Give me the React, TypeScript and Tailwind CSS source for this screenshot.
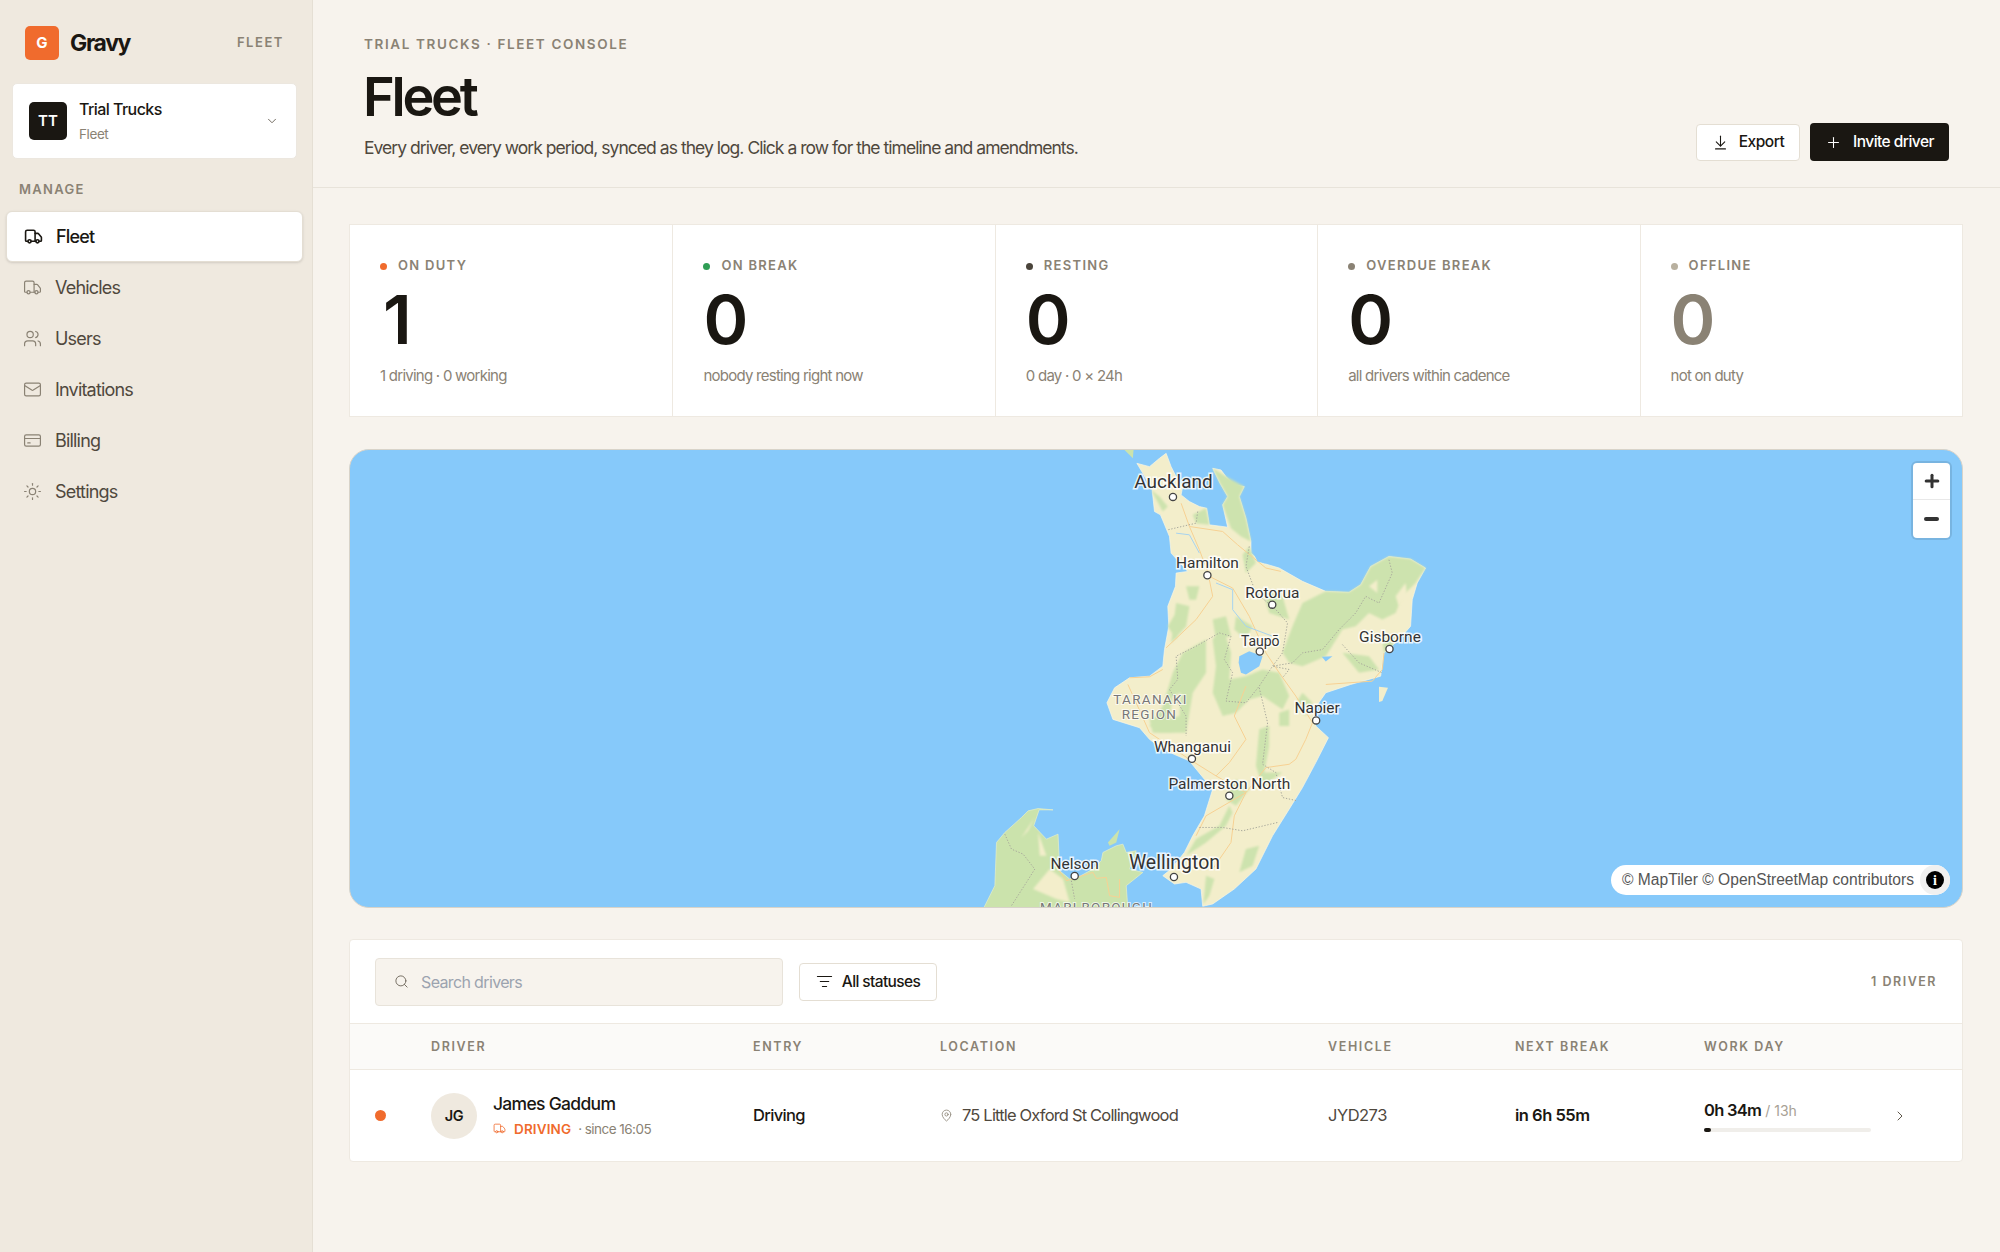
import { ChevronDown, ChevronRight, ArrowDownToLine, Plus, Search, ListFilter, MapPin, Truck, Users, Mail, Sun } from 'lucide-react';

function BillingIcon({ className }: { className?: string }) {
  return (
    <svg viewBox="0 0 24 24" fill="none" stroke="currentColor" strokeWidth="1.5" strokeLinecap="round" className={className}>
      <rect x="2" y="5" width="20" height="14" rx="2" />
      <path d="M2 9.5h20M6 15h3" />
    </svg>
  );
}

const navItems = [
  { label: 'Fleet', icon: Truck, active: true },
  { label: 'Vehicles', icon: Truck },
  { label: 'Users', icon: Users },
  { label: 'Invitations', icon: Mail },
  { label: 'Billing', icon: BillingIcon },
  { label: 'Settings', icon: Sun },
];

const stats = [
  { label: 'ON DUTY', value: '1', note: '1 driving · 0 working', dot: 'bg-[#f06b2d]', num: 'text-[#1a1712] ml-[3px]' },
  { label: 'ON BREAK', value: '0', note: 'nobody resting right now', dot: 'bg-[#2f9e55]', num: 'text-[#1a1712]' },
  { label: 'RESTING', value: '0', note: '0 day · 0 × 24h', dot: 'bg-[#4a443b]', num: 'text-[#1a1712]' },
  { label: 'OVERDUE BREAK', value: '0', note: 'all drivers within cadence', dot: 'bg-[#8a8274]', num: 'text-[#1a1712]' },
  { label: 'OFFLINE', value: '0', note: 'not on duty', dot: 'bg-[#b8b09f]', num: 'text-[#8a8274]' },
];

const cities = [
  { name: 'Auckland', x: 824, size: 19, dotX: 823.5, dotY: 47, dy: 8.5 },
  { name: 'Hamilton', x: 858, size: 15.5, dotX: 858, dotY: 125.5, dy: 7 },
  { name: 'Rotorua', x: 923, size: 15.5, dotX: 923, dotY: 155, dy: 7 },
  { name: 'Taupō', x: 911, size: 14, dotX: 910.5, dotY: 202, dy: 6 },
  { name: 'Gisborne', x: 1041, size: 15.5, dotX: 1040.5, dotY: 199.5, dy: 7 },
  { name: 'Napier', x: 968, size: 15.5, dotX: 967, dotY: 271, dy: 7 },
  { name: 'Whanganui', x: 843, size: 15.5, dotX: 842.5, dotY: 309.5, dy: 7 },
  { name: 'Palmerston North', x: 880, size: 15.5, dotX: 880, dotY: 346.5, dy: 7 },
  { name: 'Nelson', x: 725, size: 15.5, dotX: 725, dotY: 427, dy: 7 },
  { name: 'Wellington', x: 825, size: 19.5, dotX: 824.5, dotY: 428, dy: 8 },
];

function NzMap() {
  return (
    <svg viewBox="0 0 1613 458" className="block w-full h-full">
      <defs>
        <filter id="soft" x="-10%" y="-10%" width="120%" height="120%">
          <feGaussianBlur stdDeviation="3" />
        </filter>
      </defs>
      <g transform="translate(700,-10) scale(0.3333)">
        <path fill="#f3eecb" stroke="#fbf8e6" strokeWidth="2" d="M262,70 L300,80 L330,55 L350,40 L365,80 L380,110 L400,140 L395,165 L420,185 L450,200 L472,205 L480,255 L535,262 L520,195 L535,170 L512,130 L490,85 L515,90 L530,110 L555,135 L585,140 L570,170 L590,235 L605,305 L605,340 L640,370 L690,385 L760,425 L830,455 L900,458 L935,435 L965,380 L1020,350 L1085,358 L1130,385 L1105,430 L1090,480 L1085,560 L1050,600 L1005,640 L995,710 L905,735 L830,760 L795,810 L800,860 L838,895 L800,970 L760,1045 L720,1110 L670,1190 L620,1290 L555,1350 L490,1395 L460,1402 L455,1350 L410,1330 L375,1335 L340,1310 L365,1290 L405,1240 L430,1190 L465,1130 L490,1050 L465,1020 L420,965 L340,930 L300,900 L270,865 L190,840 L172,790 L195,745 L240,715 L300,710 L340,680 L345,630 L358,560 L355,500 L378,440 L380,400 L415,395 L365,340 L360,290 L333,225 L315,215 L308,150 L280,100 Z" />
        <path fill="#f3eecb" d="M990,742 L1017,745 L1000,785 L990,788 Z" />
        <path fill="#cbe3ac" d="M225,30 L252,30 L250,55 Z" />
        <g fill="#cde3ae" filter="url(#soft)">
          <path d="M965,380 L1020,350 L1085,358 L1130,385 L1100,430 L1060,470 L1040,520 L1000,540 L960,520 L920,560 L880,570 L830,650 L760,680 L720,670 L700,640 L730,560 L760,490 L830,455 L900,458 L935,435 Z" />
          <path d="M490,85 L530,110 L585,140 L570,170 L590,235 L605,305 L575,290 L545,265 L520,195 L535,170 L512,130 Z" />
          <path d="M600,320 L620,370 L590,400 L580,345 Z" />
          <path d="M520,560 L545,640 L540,720 L590,710 L640,690 L690,700 L720,770 L700,810 L640,770 L600,780 L560,820 L520,830 L490,760 L500,680 L490,600 Z" />
          <path d="M400,640 L470,600 L470,700 L430,760 L410,880 L330,880 L300,860 L340,800 L370,700 Z" />
          <path d="M355,560 L385,510 L410,510 L380,600 Z" />
          <path d="M630,870 L660,860 L660,920 L645,1000 L700,1000 L640,1040 L620,980 Z" />
          <path d="M540,1100 L510,1160 L440,1200 L410,1250 L470,1210 L530,1160 L550,1120 Z" />
          <path d="M590,1230 L630,1220 L610,1280 L570,1300 Z" />
          <path d="M305,150 L340,215 L355,200 L330,170 Z" />
          <path d="M430,225 L470,205 L480,255 L440,250 Z" />
          <path d="M410,440 L450,440 L440,480 L420,480 Z" />
          <path d="M470,1310 L495,1320 L480,1370 L462,1395 Z" />
          <path d="M560,530 L610,560 L590,600 L555,570 Z" />
          <path d="M760,760 L790,790 L770,830 L735,800 Z" />
          <path d="M880,640 L960,650 L990,690 L930,700 Z" />
          <path d="M1000,600 L1040,580 L1030,620 L1005,640 Z" />
          <path d="M380,490 L420,500 L410,560 L365,610 Z" />
          <path d="M490,540 L530,530 L545,590 L500,600 Z" />
          <path d="M640,450 L700,470 L720,540 L660,520 Z" />
          <path d="M300,840 L350,830 L370,880 L310,880 Z" />
          <path d="M690,820 L720,810 L720,860 L690,860 Z" />
          <path d="M560,1020 L600,1050 L560,1100 L530,1080 Z" />
        </g>
        <g fill="#f3eecb" filter="url(#soft)">
          <path d="M1040,470 L1070,430 L1075,470 L1050,500 Z" />
          <path d="M960,440 L985,420 L985,460 Z" />
          <path d="M370,770 L395,760 L390,830 L360,840 Z" />
        </g>
        <g fill="none" stroke="#f7d193" strokeWidth="3">
          <path d="M395,190 L420,260 L450,330 L480,410 L550,445 L600,530 L650,640 L690,700 L740,770 L790,850 L770,900 L740,960 L720,975 L650,985 L590,1060 L555,1130 L545,1210 L490,1290" />
          <path d="M420,260 L520,275 L565,315 L650,385 L695,395" />
          <path d="M480,420 L490,470 L440,540 L350,625" />
          <path d="M240,715 L300,712 L340,690 M235,735 L260,790 L300,880 L420,960 L500,1010 L590,1060 L470,1130 L440,1190" />
          <path d="M590,740 L555,830 L590,900 L540,970 L500,1010" />
          <path d="M830,735 L970,725 L1000,690 L1005,640" />
        </g>
        <g fill="none" stroke="#a7d3ef" strokeWidth="3">
          <path d="M380,280 L420,285 L450,340 M500,430 L550,450 L550,510 L590,560 L670,590" />
        </g>
        <g fill="none" stroke="#a8a89b" strokeWidth="3" strokeDasharray="4 5">
          <path d="M445,215 L440,250 L355,270 M600,320 L590,380 L620,460 L680,510 L715,550 L700,640 L670,680 L630,740 L590,790 L530,785 L550,700 L525,660 L545,590 L510,580 L440,620 L380,650 L385,720 L360,750 L410,830 L410,890" />
          <path d="M1020,360 L1030,400 L990,490 L950,470 L920,520 L870,570 L820,630 L760,640 L730,670 L670,680 L720,690 L700,715" />
          <path d="M880,615 L930,670 L1000,700 M630,745 L655,850 L640,975 L680,1000 L700,1075 L745,1085" />
          <path d="M450,1165 L520,1165 L580,1175 L685,1150" />
        </g>
        <g fill="#86c9fa">
          <path d="M570,650 L600,635 L640,650 L630,680 L590,705 L575,700 L568,670 Z" />
          <path d="M818,652 L850,650 L830,666 Z" />
          <path d="M610,335 L650,372 L625,365 Z" />
        </g>
      </g>
      <g transform="translate(610,340) scale(0.3333)">
        <path fill="#cbe3ac" stroke="#e8f0c8" strokeWidth="2" d="M70,360 L105,290 L110,160 L135,130 L185,85 L205,65 L235,58 L280,62 L238,62 L222,110 L260,150 L295,135 L298,200 L290,215 L300,245 L330,270 L360,262 L400,240 L425,215 L430,190 L470,170 L490,165 L500,190 L530,185 L510,240 L550,250 L500,290 L505,360 Z" />
        <path fill="#cbe3ac" d="M445,160 L480,120 L470,160 L450,170 Z" />
        <g fill="#f3eecb" filter="url(#soft)">
          <path d="M185,145 L225,85 L205,125 Z" />
          <path d="M235,130 L260,200 L240,200 Z" />
          <path d="M270,240 L310,270 L330,340 L290,330 L220,300 Z" />
        </g>
        <g fill="none" stroke="#f7d193" strokeWidth="3">
          <path d="M295,240 L320,275 L400,250 L410,268 L440,265 L450,320 L480,325 M480,270 L480,325" />
        </g>
        <path fill="none" stroke="#a8a89b" strokeWidth="3" strokeDasharray="4 5" d="M135,135 L155,180 L190,195 L225,240 L200,280 L155,350 M335,275 L345,330" />
      </g>
      {cities.map((c) => (
        <g key={c.name}>
          <text x={c.x} y={c.dotY - c.dy} textAnchor="middle" fontSize={c.size} className="fill-[#333] stroke-white/80 stroke-[3px] [paint-order:stroke] [font-family:Roboto,sans-serif]">{c.name}</text>
          <circle cx={c.dotX} cy={c.dotY} r="3.6" fill="white" stroke="#444" strokeWidth="1.3" />
        </g>
      ))}
      <g fontSize="13.5" letterSpacing="1.3" textAnchor="middle" className="fill-[#777] stroke-white/70 stroke-[2px] [paint-order:stroke] [font-family:Roboto,sans-serif]">
        <text x="801" y="255">TARANAKI</text>
        <text x="800" y="270">REGION</text>
        <text x="747" y="463">MARLBOROUGH</text>
      </g>
    </svg>
  );
}

export default function App() {
  return (
    <div className="flex min-h-[1252px] bg-[#f7f3ed] text-[#1a1712] [font-family:Inter,sans-serif]">
      <aside className="w-[313px] shrink-0 bg-[#efe9df] border-r border-[#e5dfd4]">
        <div className="flex items-center pl-[25px] pr-[28px] pt-[26px] h-[60px]">
          <div className="w-[34px] h-[34px] rounded-[5px] bg-[#f06b2d] text-white flex items-center justify-center text-[15px] font-bold">G</div>
          <span className="ml-[11px] text-[23px] font-bold tracking-[-0.06em]">Gravy</span>
          <span className="ml-auto text-[13px] font-semibold tracking-[0.12em] text-[#8a8274]">FLEET</span>
        </div>
        <div className="ml-[12px] mr-[15px] mt-[23px] h-[76px] bg-white rounded-[5px] border border-[#ece7df] flex items-center pl-[16px] pr-[17px]">
          <div className="w-[38px] h-[38px] rounded-[5px] bg-[#1a1712] text-white flex items-center justify-center text-[15px] font-semibold">TT</div>
          <div className="ml-[12px]">
            <div className="text-[16px] font-medium tracking-[-0.035em] leading-[20px]">Trial Trucks</div>
            <div className="text-[13.5px] text-[#8a8274] tracking-[-0.03em] leading-[20px] mt-[5px]">Fleet</div>
          </div>
          <ChevronDown className="ml-auto w-[14px] h-[14px] text-[#5f574b]" strokeWidth={1.5} />
        </div>
        <div className="pl-[19px] mt-[22px] text-[13px] font-semibold tracking-[0.1em] text-[#8a8274] leading-[16px]">MANAGE</div>
        <nav className="mt-[14px] ml-[6px] mr-[9px] flex flex-col">
          {navItems.map((item) => (
            <div key={item.label} className={`h-[51px] flex items-center pl-[17px] rounded-[6px] text-[18px] tracking-[-0.045em] ${item.active ? 'bg-white border border-[#e4ded3] shadow-sm font-medium text-[#1a1712]' : 'text-[#4f483d]'}`}>
              <item.icon className={`w-[19px] h-[19px] ${item.active ? 'text-[#1a1712]' : 'text-[#8a8274]'}`} strokeWidth={item.active ? 2 : 1.5} />
              <span className="ml-[13px]">{item.label}</span>
            </div>
          ))}
        </nav>
      </aside>

      <main className="flex-1 min-w-0">
        <header className="h-[188px] border-b border-[#e8e3da] pl-[51px] pr-[51px] pb-[26px] flex items-end justify-between">
          <div className="self-start pt-[36px]">
            <div className="text-[13.5px] font-semibold tracking-[0.12em] text-[#8a8274] leading-[16px]">TRIAL TRUCKS · FLEET CONSOLE</div>
            <h1 className="text-[54px] font-semibold tracking-[-0.06em] leading-[60px] mt-[15px] -ml-[1px]">Fleet</h1>
            <p className="text-[17.5px] text-[#4f483d] tracking-[-0.055em] leading-[24px] mt-[9px]">Every driver, every work period, synced as they log. Click a row for the timeline and amendments.</p>
          </div>
          <div className="flex items-center gap-[10px]">
            <button className="h-[37px] w-[104px] bg-white border border-[#e4ded3] rounded-[4px] flex items-center justify-center gap-[10px] text-[15.5px] font-medium tracking-[-0.03em]">
              <ArrowDownToLine className="w-[17px] h-[17px]" strokeWidth={1.5} />Export
            </button>
            <button className="h-[38px] w-[139px] bg-[#1a1712] text-white rounded-[4px] flex items-center justify-center gap-[11px] text-[15.5px] font-medium tracking-[-0.035em]">
              <Plus className="w-[17px] h-[17px]" strokeWidth={1.5} />Invite driver
            </button>
          </div>
        </header>

        <div className="pl-[36px] pr-[37px] pt-[36px]">
          <section className="grid grid-cols-5 bg-white border border-[#eee9e1] h-[193px]">
            {stats.map((s, i) => (
              <div key={s.label} className={`pl-[30px] pt-[33px] ${i > 0 ? 'border-l border-[#eee9e1]' : ''}`}>
                <div className="flex items-center h-[16px] text-[13px] font-semibold tracking-[0.1em] text-[#8a8274]">
                  <span className={`w-[7px] h-[7px] rounded-full ${s.dot}`} />
                  <span className="ml-[11px]">{s.label}</span>
                </div>
                <div className={`text-[68px] font-semibold leading-[68px] mt-[11px] ${s.num}`}>{s.value}</div>
                <div className="text-[15px] text-[#8a8274] tracking-[-0.05em] leading-[20px] mt-[13px]">{s.note}</div>
              </div>
            ))}
          </section>

          <section className="relative h-[459px] mt-[32px] rounded-[20px] overflow-hidden bg-[#86c9fa] border border-[#d8d3c9]">
            <NzMap />
            <div className="absolute top-[13px] right-[12px] w-[37px] h-[75px] bg-white rounded-[4px] ring-2 ring-black/10 flex flex-col items-center">
              <div className="h-[37px] w-full flex items-center justify-center border-b border-[#e8e8e8]"><Plus className="w-[20px] h-[20px] text-[#333]" strokeWidth={3.6} /></div>
              <div className="flex-1 flex items-center justify-center"><div className="w-[15px] h-[3.5px] rounded-sm bg-[#333]" /></div>
            </div>
            <div className="absolute right-[12px] bottom-[12px] h-[30px] bg-white rounded-full flex items-center pl-[11px] text-[15.6px] text-[#555] [font-family:'Liberation_Sans',sans-serif]">
              © MapTiler © OpenStreetMap contributors
              <span className="ml-[6px] w-[30px] h-[30px] rounded-full bg-[#f0f0f0] flex items-center justify-center">
                <span className="w-[18px] h-[18px] rounded-full bg-black text-white text-[14px] font-bold flex items-center justify-center [font-family:'Liberation_Serif',serif]">i</span>
              </span>
            </div>
          </section>

          <section className="mt-[31px] bg-white border border-[#eee9e1] rounded-[4px]">
            <div className="h-[83px] flex items-center pl-[25px] pr-[25px]">
              <div className="w-[408px] h-[48px] rounded-[4px] bg-[#f7f3ed] border border-[#e8e3da] flex items-center pl-[18px]">
                <Search className="w-[15px] h-[15px] text-[#6f685c]" strokeWidth={1.5} />
                <span className="ml-[12px] text-[16px] text-[#9ca3af] tracking-[-0.04em]">Search drivers</span>
              </div>
              <button className="ml-[16px] w-[138px] h-[38px] bg-white border border-[#e4ded3] rounded-[4px] flex items-center justify-center gap-[9px] text-[15.5px] font-medium tracking-[-0.04em]">
                <ListFilter className="w-[17px] h-[17px]" strokeWidth={1.5} />All statuses
              </button>
              <span className="ml-auto pt-[1px] text-[12.5px] font-semibold tracking-[0.12em] text-[#8a8274]">1 DRIVER</span>
            </div>
            <div className="grid grid-cols-[81px_322px_187px_388px_187px_189px_1fr] h-[47px] pt-[1px] items-center bg-[#fbfaf8] border-y border-[#eee9e1] text-[12.5px] font-semibold tracking-[0.13em] text-[#8a8274]">
              <span />
              <span>DRIVER</span>
              <span>ENTRY</span>
              <span>LOCATION</span>
              <span>VEHICLE</span>
              <span>NEXT BREAK</span>
              <span>WORK DAY</span>
            </div>
            <div className="grid grid-cols-[81px_322px_187px_388px_187px_189px_1fr] h-[91px] items-center text-[16.5px] tracking-[-0.03em]">
              <span className="ml-[25px] w-[11px] h-[11px] rounded-full bg-[#f06b2d]" />
              <div className="flex items-center">
                <div className="w-[46px] h-[46px] rounded-full bg-[#efe9df] flex items-center justify-center text-[14.5px] font-semibold">JG</div>
                <div className="ml-[16px]">
                  <div className="text-[17.5px] font-medium leading-[22px] tracking-[-0.04em]">James Gaddum</div>
                  <div className="flex items-center mt-[4px] leading-[20px] text-[13.5px]">
                    <Truck className="w-[13px] h-[13px] text-[#f06b2d]" strokeWidth={1.5} />
                    <span className="ml-[8px] text-[#f06b2d] font-semibold tracking-[0.01em]">DRIVING</span>
                    <span className="ml-[7px] text-[#8a8274] tracking-[-0.04em]">· since 16:05</span>
                  </div>
                </div>
              </div>
              <span className="font-medium tracking-[-0.04em]">Driving</span>
              <span className="flex items-center text-[#4f483d]">
                <MapPin className="w-[13px] h-[13px] text-[#8a8274]" strokeWidth={1.5} />
                <span className="ml-[9px] tracking-[-0.05em]">75 Little Oxford St Collingwood</span>
              </span>
              <span className="text-[#4f483d]">JYD273</span>
              <span className="font-semibold tracking-[-0.03em]">in 6h 55m</span>
              <div className="flex items-center">
                <div className="w-[167px]">
                  <div className="leading-[20px]"><span className="font-semibold tracking-[-0.045em]">0h 34m</span> <span className="text-[14px] text-[#a8a195] tracking-normal">/ 13h</span></div>
                  <div className="mt-[7px] h-[4px] rounded-full bg-[#f0eeea]"><div className="h-full w-[7px] rounded-full bg-[#1a1712]" /></div>
                </div>
                <ChevronRight className="ml-[21px] w-[16px] h-[16px] text-[#5f574b]" strokeWidth={1.5} />
              </div>
            </div>
          </section>
        </div>
      </main>
    </div>
  );
}
